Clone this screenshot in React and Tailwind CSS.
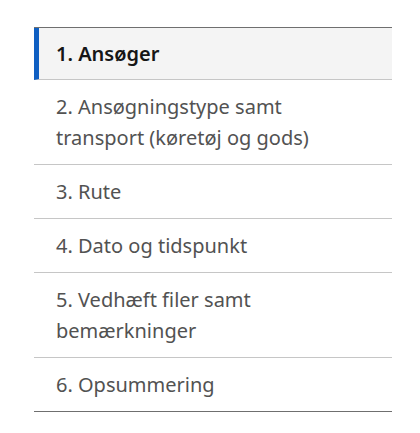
import React from 'react';

const steps = [
  '1. Ansøger',
  '2. Ansøgningstype samt transport (køretøj og gods)',
  '3. Rute',
  '4. Dato og tidspunkt',
  '5. Vedhæft filer samt bemærkninger',
  '6. Opsummering',
];

export default function App() {
  return (
    <div className="min-h-screen bg-white pt-[27px] pl-[34px]" style={{ fontFamily: '"Noto Sans", sans-serif' }}>
      {/* Step list */}
      <ul className="w-[358px] border-t border-b border-t-[#6f6f6f] border-b-[#6f6f6f]">
        {steps.map((step, i) =>
          i === 0 ? (
            <li
              key={step}
              className="bg-[#f4f4f4] border-l-[5px] border-l-[#0f5fc2] border-b border-b-[#c6c6c6] pl-[17px] pr-4 pt-[11px] pb-[10px] text-[20px] leading-[30px] font-semibold text-[#161616]"
            >
              {step}
            </li>
          ) : (
            <li
              key={step}
              className={
                'pl-[22px] pr-10 py-[11px] text-[20px] leading-[31px] text-[#525252] ' +
                (i < steps.length - 1 ? 'border-b border-b-[#c6c6c6]' : '')
              }
            >
              {step}
            </li>
          )
        )}
      </ul>
    </div>
  );
}
